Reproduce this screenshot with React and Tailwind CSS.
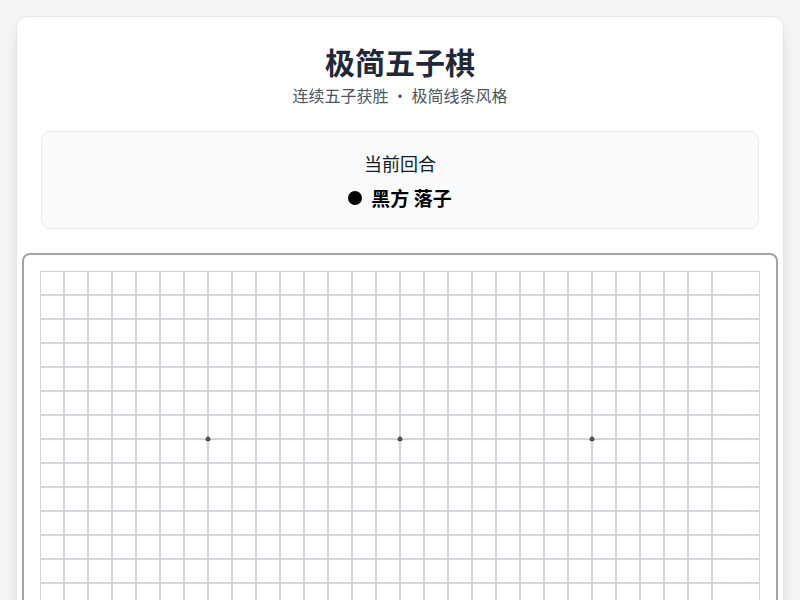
const SIZE = 720
const CELL = 24

function Board() {
  const lines = []
  for (let i = 0; i <= 28; i++) lines.push(i * CELL)
  lines.push(SIZE)
  const stars = [7, 15, 23]
  return (
    <svg width={SIZE} height={SIZE} className="block">
      <rect width={SIZE} height={SIZE} fill="#ffffff" />
      {lines.map((p) => (
        <line key={'v' + p} x1={p} y1={0} x2={p} y2={SIZE} stroke="#d1d5db" strokeWidth="2" />
      ))}
      {lines.map((p) => (
        <line key={'h' + p} x1={0} y1={p} x2={SIZE} y2={p} stroke="#d1d5db" strokeWidth="2" />
      ))}
      {stars.map((r) =>
        stars.map((c) => (
          <circle key={r + '-' + c} cx={c * CELL} cy={r * CELL} r="2.5" fill="#4b5563" />
        ))
      )}
    </svg>
  )
}

export default function App() {
  return (
    <div
      className="min-h-screen bg-[#f3f4f6] p-4"
      style={{ fontFamily: '"Noto Sans CJK SC", "Noto Sans", sans-serif' }}
    >
      <div className="bg-white border border-gray-200 rounded-xl shadow-lg px-6 pt-[26px] pb-6">
        <h1 className="text-center text-3xl font-bold text-[#1f2937]">极简五子棋</h1>
        <p className="mt-1 text-center text-base text-[#4b5563]">连续五子获胜 · 极简线条风格</p>

        <div className="mt-6 bg-[#f9fafb] border border-gray-200 rounded-[10px] pt-[17px] pb-[15px] flex flex-col items-center">
          <div className="text-lg text-[#111827]">当前回合</div>
          <div className="mt-[7px] flex items-center gap-[9px] text-[19px] font-bold text-black">
            <span className="w-[14px] h-[14px] rounded-full bg-black" />
            <span>黑方 落子</span>
          </div>
        </div>

        <div className="mt-6 flex justify-center">
          <div className="shrink-0 bg-white border-2 border-[#9ca3af] rounded-lg p-4">
            <Board />
          </div>
        </div>
      </div>
    </div>
  )
}
